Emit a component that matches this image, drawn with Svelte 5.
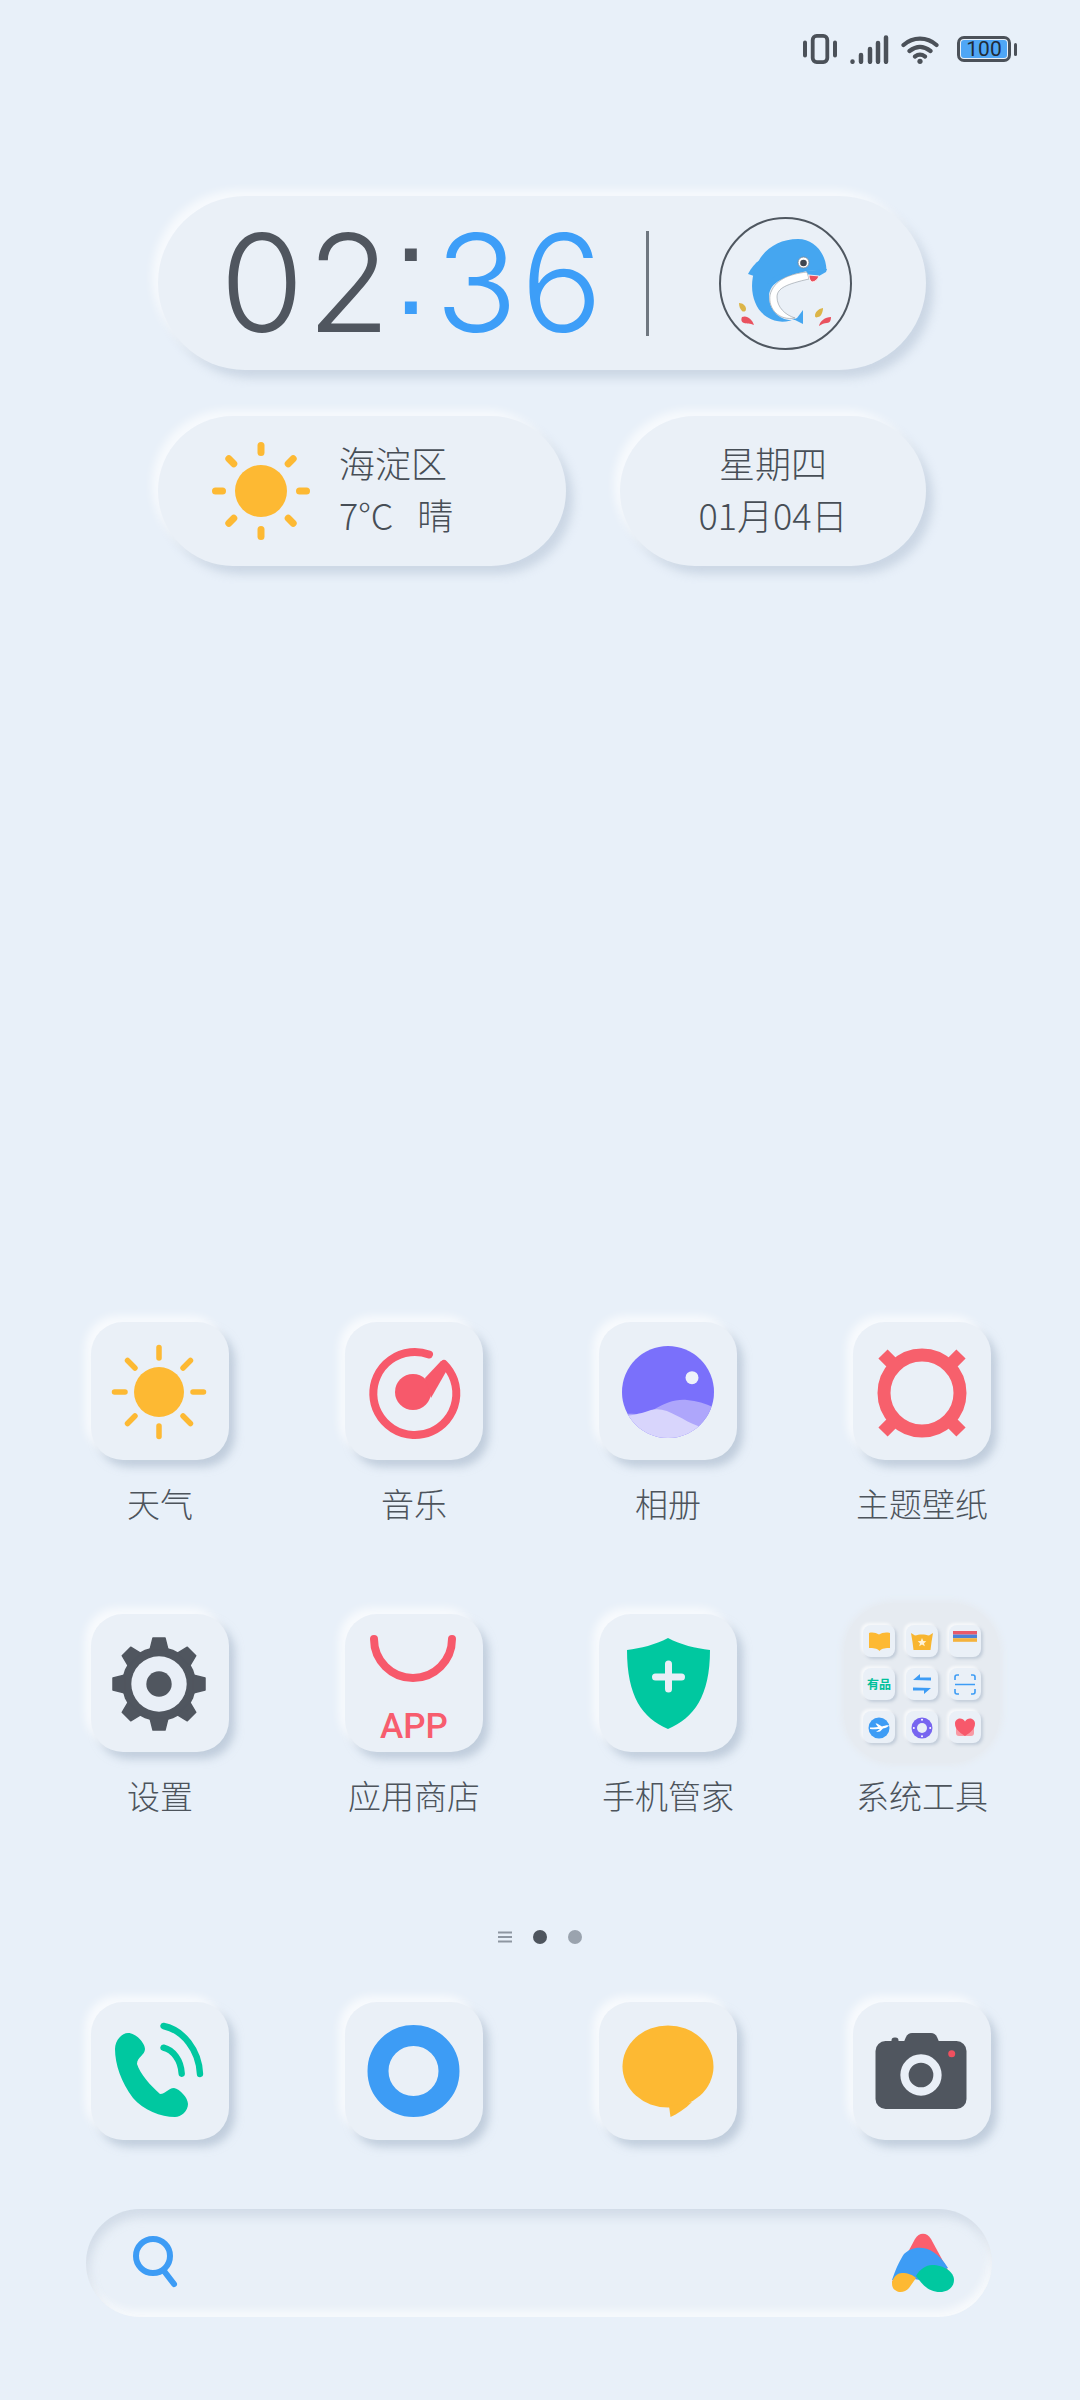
<script>
	const gearTeeth = [0, 45, 90, 135, 180, 225, 270, 315];
	const sunRays = [0, 45, 90, 135, 180, 225, 270, 315];
</script>

<div class="screen">
	<div class="status">
		<svg class="vibrate" width="34" height="30" viewBox="0 0 34 30" fill="none" stroke="#4b5159">
			<rect x="9.700" y="1.900" width="14.600" height="26.200" rx="4" stroke-width="3.800" />
			<path d="M2 8.500v13M32 8.500v13" stroke-width="4" stroke-linecap="round" />
		</svg>
		<svg class="signal" width="39" height="29" viewBox="0 0 39 29" fill="none" stroke="#4b5159" stroke-width="4.500" stroke-linecap="round">
			<path d="M2.500 26.600v.2M11 20v6.800M20 14v12.800M28 8v18.800M36 2.500v24.300" />
		</svg>
		<svg class="wifi" width="38" height="29" viewBox="0 0 38 29" fill="none" stroke="#4b5159" stroke-width="4.200" stroke-linecap="round">
			<path d="M2.500 10C12 1.500 26 1.500 35.500 10M8.500 16c7-5.500 14-5.500 21 0M14 21.500c3.500-2.500 6.500-2.500 10 0" />
			<circle cx="19" cy="26.300" r="2.600" fill="#4b5159" stroke="none" />
		</svg>
		<div class="battery">
			<div class="cell">100</div>
		</div>
		<div class="nub"></div>
	</div>

	<div class="widgets">
		<div class="clock pill">
			<div class="time"><span class="dark">02</span><span class="colon">:</span><span class="blue">36</span></div>
			<div class="divider"></div>
			<svg class="avatar" width="133" height="133" viewBox="0 0 133 133">
				<circle cx="66.500" cy="66.500" r="65.500" fill="none" stroke="#4f5760" stroke-width="2" />
				<path d="M29 57C32 51 36 46 41 43L38 60Z" fill="#45a6f0" />
				<path d="M107.500 53C107 36 95 22 79 22 58 22 42 34 36 52 29 72 35 92 48 100 57 106 68 106 78 101L84 93 84 107 76 103 74 103C60 104 50 92 50 80 50 68 60 60 88 54Z" fill="#45a6f0" />
				<path d="M88 55C70 57 55 63 51 78 49 92 60 104 76 101 66 98 58 90 58 80 58 71 68 67 90 62Z" fill="#fff" stroke="#8f979f" stroke-width="0.600" />
				<path d="M48 66C53 60 60 57 67 57 62 62 58 64 53 67Z" fill="#45a6f0" />
				<path d="M87 54L108 52 107 55 100 59 90 58Z" fill="#45a6f0" />
				<circle cx="84.500" cy="45.500" r="5.500" fill="#fff" stroke="#7b838b" stroke-width="0.800" />
				<circle cx="84.500" cy="46" r="3.300" fill="#3f464f" />
				<path d="M90 58L100 59C99 62 96 65 93 65 91 64 90 61 90 58Z" fill="#ea4f5c" stroke="#fff" stroke-width="0.800" />
				<path d="M20 86C24 86 27 89 27 92 27 95 24 95 23 94 21 92 20 89 20 86Z" fill="#dcb548" />
				<path d="M23 100C28 98 33 102 35 108 31 106 28 107 25 106 22 105 22 102 23 100Z" fill="#e9525f" />
				<path d="M96 99C96 95 99 92 104 91 104 95 102 100 99 100 97 101 96 100 96 99Z" fill="#dcb548" />
				<path d="M100 109C101 104 106 100 112 100 112 103 111 106 108 106 105 106 103 107 100 109Z" fill="#e9525f" />
			</svg>
		</div>
		<div class="row">
			<div class="weather pill">
				<svg width="100" height="100" viewBox="0 0 100 100">
					<circle cx="50" cy="50" r="26" fill="#fdb933" />
					{#each sunRays as angle}
						<path d="M50 11.500V4.500" stroke="#fdb933" stroke-width="7" stroke-linecap="round" transform="rotate({angle} 50 50)" />
					{/each}
				</svg>
				<div class="lines">
					<div>海淀区</div>
					<div>7°C&nbsp;&nbsp; 晴</div>
				</div>
			</div>
			<div class="date pill">
				<div class="lines center">
					<div>星期四</div>
					<div>01月04日</div>
				</div>
			</div>
		</div>
	</div>

	<div class="apps grid">
		<div class="app">
			<div class="tile">
				<svg width="138" height="138" viewBox="0 0 138 138">
					<circle cx="68" cy="70" r="25" fill="#fdb933" />
					{#each sunRays as angle}
						<path d="M68 36V25.500" stroke="#fdb933" stroke-width="5.500" stroke-linecap="round" transform="rotate({angle} 68 70)" />
					{/each}
				</svg>
			</div>
			<span>天气</span>
		</div>
		<div class="app">
			<div class="tile">
				<svg width="138" height="138" viewBox="0 0 138 138">
					<path d="M84 32.500A41.500 41.500 0 1 0 99 42" fill="none" stroke="#f7596b" stroke-width="8" stroke-linecap="round" />
					<circle cx="68" cy="70" r="18" fill="#f7596b" />
					<path d="M80 56L96 39 100 40 102 48 86 76Z" fill="#f7596b" />
				</svg>
			</div>
			<span>音乐</span>
		</div>
		<div class="app">
			<div class="tile">
				<svg width="138" height="138" viewBox="0 0 138 138">
					<defs>
						<clipPath id="lens"><circle cx="69" cy="70" r="46" /></clipPath>
					</defs>
					<circle cx="69" cy="70" r="46" fill="#7a70fb" />
					<g clip-path="url(#lens)">
						<path d="M20 92C36 91 44 94 54 88 66 81 76 77 88 78 99 79 108 82 118 87V120H20Z" fill="#aea6fb" />
						<path d="M20 94C34 94 44 91 52 88 68 84 82 98 99 104L100 120H20Z" fill="#d8d5fc" />
					</g>
					<circle cx="93" cy="55.700" r="6.500" fill="#eef2fa" />
				</svg>
			</div>
			<span>相册</span>
		</div>
		<div class="app">
			<div class="tile">
				<svg width="138" height="138" viewBox="0 0 138 138">
					<circle cx="69" cy="71" r="38" fill="none" stroke="#f7606c" stroke-width="13" />
					<path d="M41 43L30 32M97 43L108 32M41 99L30 110M97 99L108 110" stroke="#f7606c" stroke-width="13" />
				</svg>
			</div>
			<span>主题壁纸</span>
		</div>

		<div class="app">
			<div class="tile">
				<svg width="138" height="138" viewBox="0 0 138 138">
					<circle cx="68" cy="70" r="37" fill="#50565f" />
					{#each gearTeeth as angle}
						<path d="M59 36L62 24H74L77 36Z" fill="#50565f" stroke="#50565f" stroke-width="1.500" stroke-linejoin="round" transform="rotate({angle} 68 70)" />
					{/each}
					<circle cx="68" cy="70" r="27.700" fill="#e9eff7" />
					<circle cx="68" cy="70" r="12.700" fill="#50565f" />
				</svg>
			</div>
			<span>设置</span>
		</div>
		<div class="app">
			<div class="tile">
				<svg width="138" height="138" viewBox="0 0 138 138">
					<path d="M29 25A39 39 0 0 0 107 25" fill="none" stroke="#f7596b" stroke-width="8" stroke-linecap="round" />
					<text x="69" y="124" text-anchor="middle" class="app-text">APP</text>
				</svg>
			</div>
			<span>应用商店</span>
		</div>
		<div class="app">
			<div class="tile">
				<svg width="138" height="138" viewBox="0 0 138 138">
					<path d="M69 24C82 31 96 34 111 36 111 82 95 104 69 115 43 104 28 82 28 36 42 34 56 31 69 24Z" fill="#00c8a0" />
					<path d="M69.500 50V75M56.500 63H82.500" stroke="#e9eff7" stroke-width="7" stroke-linecap="round" />
				</svg>
			</div>
			<span>手机管家</span>
		</div>
		<div class="app">
			<div class="folder">
				<div class="mini">
					<svg width="32" height="32" viewBox="0 0 32 32"><path d="M6 8C10 7 13 8 16 9.500 19 8 22 7 27 8V23C23 23 19 23 16.500 26 14 23 10 23 6 23Z" fill="#fdb933" /></svg>
				</div>
				<div class="mini">
					<svg width="32" height="32" viewBox="0 0 32 32">
						<path d="M5 8L9 10.500C13 9 19 9 23 10.500L27 8 25.500 17 24.500 25H7.500L6.500 17Z" fill="#f8b52f" />
						<path d="M16 13l1.300 3 3 .2-2.300 2 .8 3-2.800-1.700-2.800 1.700.8-3-2.300-2 3-.2Z" fill="#fff3d6" />
					</svg>
				</div>
				<div class="mini">
					<svg width="32" height="32" viewBox="0 0 32 32">
						<rect x="4" y="6" width="24" height="3.600" fill="#e85a6a" />
						<rect x="4" y="9.600" width="24" height="3.600" fill="#4a83d8" />
						<rect x="4" y="13.200" width="24" height="3.600" fill="#f4b23c" />
					</svg>
				</div>
				<div class="mini youpin">有品</div>
				<div class="mini">
					<svg width="32" height="32" viewBox="0 0 32 32" fill="#3d9cf5">
						<path d="M14 6L7 12 25 12.500V9.500H14Z" />
						<path d="M18 26L25 20 7 19.500V22.500H18Z" />
					</svg>
				</div>
				<div class="mini">
					<svg width="32" height="32" viewBox="0 0 32 32" fill="none" stroke="#3d9cf5" stroke-width="1.600">
						<path d="M10 7H8Q6 7 6 9V12M22 7H24Q26 7 26 9V12M10 26H8Q6 26 6 24V21M22 26H24Q26 26 26 24V21M6 16.500H26" />
					</svg>
				</div>
				<div class="mini">
					<svg width="32" height="32" viewBox="0 0 32 32">
						<circle cx="16" cy="17" r="10.500" fill="#3d9cf5" />
						<path d="M7 18C12 18.500 15 18 17 18L13 21 17 20.500 20 17.500C23 17 25.500 15.500 26 14.500 24 14 21 15 19 15.500L14 12.500H12.500L15 16C12 16.500 9 16.500 7 16.500Z" fill="#fff" />
					</svg>
				</div>
				<div class="mini">
					<svg width="32" height="32" viewBox="0 0 32 32">
						<circle cx="16" cy="17" r="10.500" fill="#7765f0" />
						<circle cx="16" cy="17" r="5" fill="#e9eff7" />
						<circle cx="16" cy="8.800" r="1" fill="#fff" />
						<circle cx="16" cy="25.200" r="1" fill="#fff" />
						<circle cx="7.800" cy="17" r="1" fill="#fff" />
						<circle cx="24.200" cy="17" r="1" fill="#fff" />
					</svg>
				</div>
				<div class="mini">
					<svg width="32" height="32" viewBox="0 0 32 32">
						<path d="M7 17H25V22Q25 25 22 25H10Q7 25 7 22Z" fill="#f89aa4" />
						<path d="M16 25C10 21 6 18 6 12.500 6 9 9 7.500 11 7.500 13 7.500 15 8.500 16 10.500 17 8.500 19 7.500 21 7.500 23 7.500 26 9 26 12.500 26 18 22 21 16 25Z" fill="#f7596b" />
					</svg>
				</div>
			</div>
			<span>系统工具</span>
		</div>
	</div>

	<div class="dots">
		<svg width="14" height="12" viewBox="0 0 14 12" stroke="#8d96a1" stroke-width="2"><path d="M0 1.500H14M0 6H14M0 10.500H14" /></svg>
		<i class="dot active"></i>
		<i class="dot"></i>
	</div>

	<div class="dock grid">
		<div class="tile">
			<svg width="138" height="138" viewBox="0 0 138 138">
				<path d="M24 47C24 38 31 31 37 31 45 31 54 41 54 47 54 53 46 55 46 62 49 72 60 84 69 92 75 92 77 86 83 86 89 87 97 96 97 102 97 109 90 115 84 115 70 115 52 108 42 96 30 80 24 62 24 47Z" fill="#00c8a0" />
				<path d="M72.500 24C92 28 108 48 109 72M72.500 45.700C82 48 90 58 90.700 71.700" fill="none" stroke="#00c8a0" stroke-width="6.400" stroke-linecap="round" />
			</svg>
		</div>
		<div class="tile">
			<svg width="138" height="138" viewBox="0 0 138 138">
				<circle cx="68.500" cy="69" r="35.500" fill="#eaf0f7" stroke="#3d9cf5" stroke-width="21" />
			</svg>
		</div>
		<div class="tile">
			<svg width="138" height="138" viewBox="0 0 138 138">
				<ellipse cx="69" cy="64.500" rx="45.500" ry="41" fill="#fdb933" />
				<path d="M70 104L71.500 115C78 112 86 107 93 100Z" fill="#fdb933" />
			</svg>
		</div>
		<div class="tile">
			<svg width="138" height="138" viewBox="0 0 138 138">
				<path d="M50 42L53 35Q55 31 59 31H78Q82 31 84 35L87 42Z" fill="#50565f" />
				<rect x="38.500" y="35.500" width="7" height="8" rx="3" fill="#50565f" />
				<rect x="22.500" y="39" width="91" height="68" rx="10" fill="#50565f" />
				<circle cx="68" cy="73" r="16.500" fill="none" stroke="#e9eff7" stroke-width="8.300" />
				<circle cx="98.700" cy="51.700" r="3.500" fill="#f0505f" />
			</svg>
		</div>
	</div>

	<div class="search">
		<svg width="50" height="54" viewBox="0 0 50 54" fill="none" stroke="#3d9cf5" stroke-width="6" stroke-linecap="round">
			<circle cx="20" cy="20" r="17" />
			<path d="M31 35L41 48" />
		</svg>
		<svg class="logo" width="64" height="62" viewBox="0 0 64 62">
			<path d="M2 50L25 7C29 0 37 0 41 7L60 42Z" fill="#fa5f6e" />
			<path d="M2 48C6 36 10 28 14 22 24 12 44 12 58 36L30 48 18 46Z" fill="#3d9cf5" />
			<path d="M2 50C4 44 8 41 12 41 18 41 23 43 26 46L19 56C15 61 8 61 5 58 2 56 2 53 2 50Z" fill="#fdb933" />
			<path d="M26 44C30 37 36 33 42 33 54 33 64 40 64 48 64 55 58 60 50 60 38 60 32 52 26 44Z" fill="#00c8a0" />
		</svg>
	</div>
</div>

<style>
	:global(body) {
		background: #e8f0f9;
	}

	.screen {
		width: 1080px;
		height: 2400px;
		overflow: hidden;
		background: #e8f0f9;
		color: #474e56;
		font-family: "Noto Sans CJK SC", "Noto Sans", sans-serif;
		font-weight: 300;
	}

	.status {
		display: flex;
		align-items: center;
		justify-content: flex-end;
		height: 30px;
		padding: 34px 63px 0 0;
	}

	.status svg {
		display: block;
	}

	.signal {
		margin-left: 13px;
	}

	.wifi {
		margin-left: 12px;
	}

	.battery {
		width: 54px;
		height: 26px;
		box-sizing: border-box;
		margin-left: 18px;
		padding: 1px;
		border: 3px solid #4b5159;
		border-radius: 7px;
	}

	.cell {
		height: 100%;
		border-radius: 3px;
		background: #4fa6f5;
		color: #1f2b38;
		font: 21px/18px Roboto, sans-serif;
		text-align: center;
	}

	.nub {
		width: 3px;
		height: 13px;
		margin-left: 3px;
		border-radius: 2px;
		background: #4b5159;
	}

	.widgets {
		width: 768px;
		margin: 132px 0 0 158px;
	}

	.pill {
		display: flex;
		align-items: center;
		box-sizing: border-box;
		background: #eaf0f7;
		box-shadow:
			-6px -6px 9px rgba(255, 255, 255, 0.65),
			7px 8px 10px rgba(168, 184, 204, 0.45);
	}

	.clock {
		height: 174px;
		border-radius: 87px;
	}

	.time {
		width: 426px;
		margin: 5px 0 0 62px;
		font: 300 136px/140px Inter, sans-serif;
		letter-spacing: 3px;
		white-space: nowrap;
	}

	.dark {
		color: #50565f;
	}

	.blue {
		color: #3d9ef8;
	}

	.colon {
		display: inline-block;
		margin-right: 4px;
		background: linear-gradient(#50565f 50%, #3d9ef8 50%);
		background-clip: text;
		-webkit-background-clip: text;
		color: transparent;
		font: 400 125px/140px "Liberation Sans", sans-serif;
		transform: translateY(-18px);
	}

	.divider {
		width: 3px;
		height: 105px;
		background: #6f7780;
	}

	.avatar {
		margin-left: 70px;
	}

	.row {
		display: flex;
		justify-content: space-between;
		margin-top: 46px;
	}

	.weather {
		width: 408px;
		height: 150px;
		padding: 0 0 6px 53px;
		border-radius: 75px;
	}

	.weather svg {
		margin-top: 6px;
	}

	.date {
		justify-content: center;
		width: 306px;
		height: 150px;
		padding-bottom: 6px;
		border-radius: 75px;
	}

	.lines {
		margin-left: 28px;
		font-size: 36px;
		line-height: 52px;
		white-space: nowrap;
	}

	.lines.center {
		margin-left: 0;
		text-align: center;
	}

	.grid {
		display: grid;
		grid-template-columns: repeat(4, 254px);
		padding-left: 33px;
	}

	.apps {
		grid-auto-rows: 292px;
		margin-top: 756px;
	}

	.app {
		display: flex;
		flex-direction: column;
		align-items: center;
	}

	.app span {
		margin-top: 24px;
		color: #4d545c;
		font-size: 33px;
		line-height: 38px;
	}

	.tile {
		width: 138px;
		height: 138px;
		border-radius: 32px;
		background: #eaf0f7;
		box-shadow:
			-6px -6px 8px rgba(255, 255, 255, 0.7),
			6px 7px 9px rgba(160, 176, 196, 0.55);
	}

	.dock .tile {
		justify-self: center;
	}

	.tile svg {
		display: block;
	}

	.app-text {
		fill: #f75d6e;
		font: 500 35px Roboto, sans-serif;
	}

	.folder {
		display: grid;
		grid-template-columns: repeat(3, 32px);
		grid-auto-rows: 32px;
		gap: 11px;
		box-sizing: border-box;
		width: 156px;
		height: 160px;
		margin-top: -11px;
		margin-bottom: -11px;
		padding: 22px 19px;
		border-radius: 50px;
		background: #e6ebf1;
		box-shadow: 0 0 6px 3px #e6ebf1;
	}

	.mini {
		width: 32px;
		height: 32px;
		border-radius: 8px;
		background: #eaf0f7;
		box-shadow:
			-2px -2px 3px rgba(255, 255, 255, 0.7),
			2px 2px 3px rgba(160, 176, 196, 0.5);
	}

	.mini svg {
		display: block;
	}

	.youpin {
		color: #00c09a;
		font-size: 12px;
		font-weight: 700;
		line-height: 32px;
		text-align: center;
		white-space: nowrap;
	}

	.dots {
		display: flex;
		align-items: center;
		justify-content: center;
		gap: 21px;
		margin-top: 24px;
	}

	.dots svg {
		display: block;
	}

	.dot {
		width: 14px;
		height: 14px;
		border-radius: 50%;
		background: #9aa3ae;
	}

	.dot.active {
		background: #4e555e;
	}

	.dock {
		margin-top: 58px;
	}

	.search {
		display: flex;
		align-items: center;
		justify-content: space-between;
		box-sizing: border-box;
		width: 906px;
		height: 108px;
		margin: 69px 0 0 86px;
		padding: 0 38px 0 47px;
		border-radius: 54px;
		background: #e9f0f8;
		box-shadow:
			inset 3px 8px 10px rgba(170, 184, 202, 0.35),
			inset -3px -6px 8px rgba(255, 255, 255, 0.7);
	}
</style>
